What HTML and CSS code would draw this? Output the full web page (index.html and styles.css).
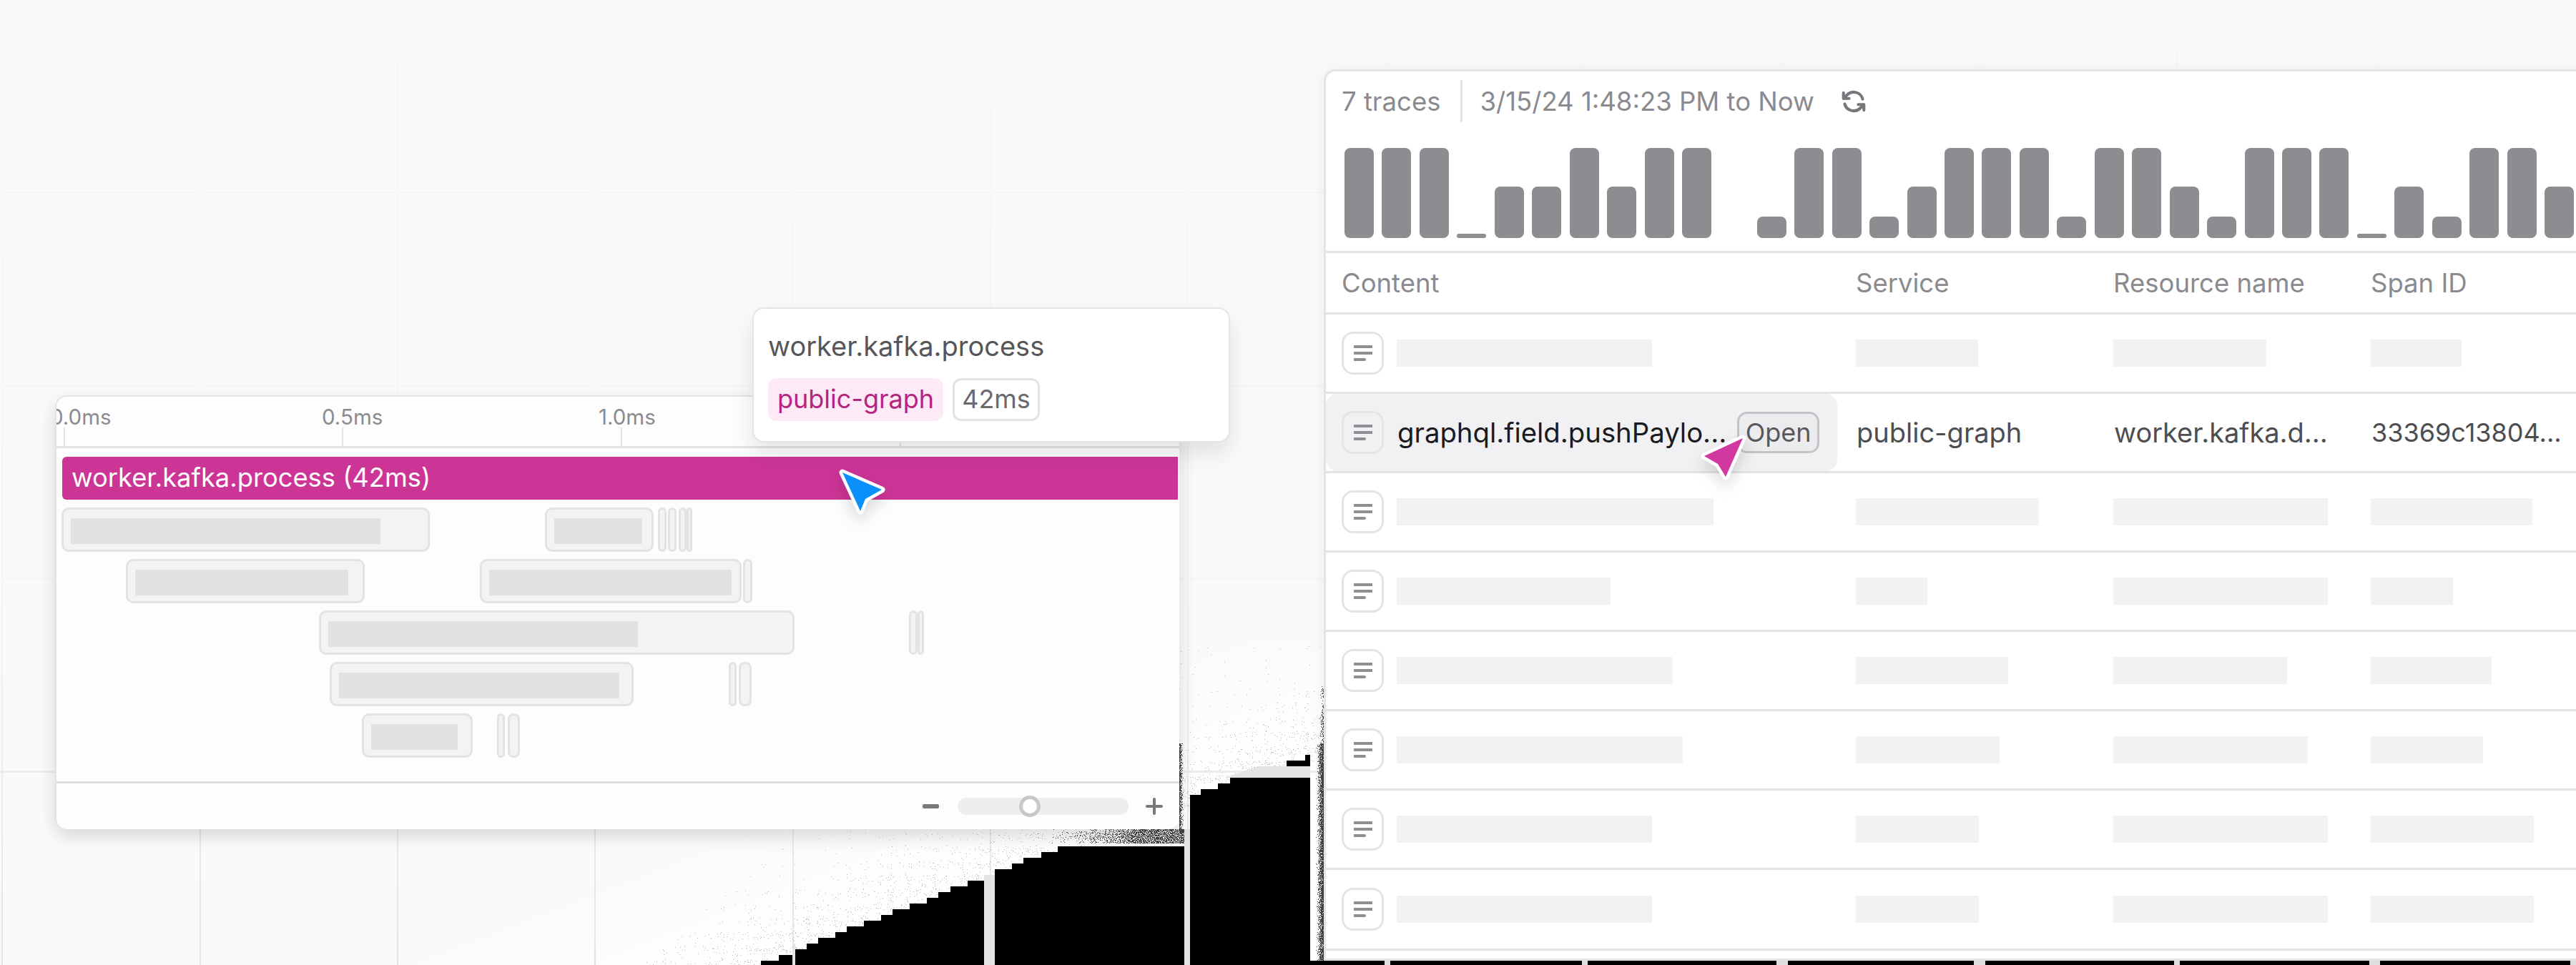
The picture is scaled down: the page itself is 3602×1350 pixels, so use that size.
FILE: index.html
```html
<!DOCTYPE html>
<html lang="en">
<head>
<meta charset="utf-8">
<title>Trace view</title>
<link rel="stylesheet" href="styles.css">
</head>
<body>
<main class="canvas">
  <svg class="backdrop" width="3602" height="1350" viewBox="0 0 3602 1350" aria-hidden="true">
    <defs>
      <linearGradient id="fadeV" gradientUnits="userSpaceOnUse" x1="0" y1="0" x2="0" y2="1350">
        <stop offset="0" stop-color="#f8f8f8"/>
        <stop offset="0.6" stop-color="#f5f5f5"/>
        <stop offset="1" stop-color="#e4e4e4"/>
      </linearGradient>
      <linearGradient id="glowFade" gradientUnits="userSpaceOnUse" x1="1380" y1="1020" x2="1448" y2="1196">
        <stop offset="0" stop-color="#fff" stop-opacity="0"/>
        <stop offset="1" stop-color="#fff" stop-opacity="0.9"/>
      </linearGradient>
      <linearGradient id="speckle" gradientUnits="userSpaceOnUse" x1="1408" y1="1093" x2="1448" y2="1196">
        <stop offset="0" stop-color="#000" stop-opacity="0.18"/>
        <stop offset="1" stop-color="#000" stop-opacity="0.3"/>
      </linearGradient>
      <linearGradient id="edgeRight" gradientUnits="userSpaceOnUse" x1="1836" y1="0" x2="1851" y2="0">
        <stop offset="0" stop-color="#000" stop-opacity="0.1"/>
        <stop offset="1" stop-color="#000" stop-opacity="0.75"/>
      </linearGradient>
      <linearGradient id="edgeSoft" gradientUnits="userSpaceOnUse" x1="1842" y1="0" x2="1851" y2="0">
        <stop offset="0" stop-color="#000" stop-opacity="0.1"/>
        <stop offset="1" stop-color="#000" stop-opacity="0.5"/>
      </linearGradient>
      <linearGradient id="edgeBottom" gradientUnits="userSpaceOnUse" x1="1400" y1="0" x2="1600" y2="0">
        <stop offset="0" stop-color="#000" stop-opacity="0.1"/>
        <stop offset="1" stop-color="#000" stop-opacity="0.55"/>
      </linearGradient>
      <linearGradient id="edgePanel" gradientUnits="userSpaceOnUse" x1="1649" y1="0" x2="1656" y2="0">
        <stop offset="0" stop-color="#000" stop-opacity="0.7"/>
        <stop offset="1" stop-color="#000" stop-opacity="0.2"/>
      </linearGradient>
      <filter id="dither" filterUnits="userSpaceOnUse" x="1300" y="900" width="600" height="450" color-interpolation-filters="sRGB">
        <feTurbulence type="fractalNoise" baseFrequency="0.95" numOctaves="2" seed="7" result="noise"/>
        <feColorMatrix in="noise" type="matrix" values="0 0 0 0 0  0 0 0 0 0  0 0 0 0 0  1 0 0 0 0" result="noiseAlpha"/>
        <feComposite in="SourceAlpha" in2="noiseAlpha" operator="arithmetic" k1="0" k2="1" k3="1" k4="-0.5" result="sum"/>
        <feComponentTransfer in="sum" result="mask">
          <feFuncA type="discrete" tableValues="0 1"/>
        </feComponentTransfer>
        <feFlood flood-color="#444"/>
        <feComposite in2="mask" operator="in"/>
      </filter>
      <filter id="ditherLight" filterUnits="userSpaceOnUse" x="900" y="900" width="1000" height="450" color-interpolation-filters="sRGB">
        <feTurbulence type="fractalNoise" baseFrequency="0.95" numOctaves="2" seed="11" result="noise"/>
        <feColorMatrix in="noise" type="matrix" values="0 0 0 0 0  0 0 0 0 0  0 0 0 0 0  1 0 0 0 0" result="noiseAlpha"/>
        <feComposite in="SourceAlpha" in2="noiseAlpha" operator="arithmetic" k1="0" k2="1" k3="1" k4="-0.5" result="sum"/>
        <feComponentTransfer in="sum" result="mask">
          <feFuncA type="discrete" tableValues="0 1"/>
        </feComponentTransfer>
        <feFlood flood-color="#bbb"/>
        <feComposite in2="mask" operator="in"/>
      </filter>
    </defs>

    <polygon class="glow" points="0,1350 0,900 1851,900 1851,1350"/>

    <g class="grid-lines">
      <rect x="2" y="0" width="2" height="1350"/>
      <rect x="279" y="0" width="2" height="1350"/>
      <rect x="555" y="0" width="2" height="1350"/>
      <rect x="831" y="0" width="2" height="1350"/>
      <rect x="1108" y="0" width="2" height="1350"/>
      <rect x="1384" y="0" width="2" height="1350"/>
      <rect x="1660" y="0" width="2" height="1350"/>
      <rect x="1938" y="0" width="2" height="100"/>
      <rect x="2214" y="0" width="2" height="100"/>
      <rect x="2490" y="0" width="2" height="100"/>
      <rect x="2767" y="0" width="2" height="100"/>
      <rect x="3043" y="0" width="2" height="100"/>
      <rect x="3320" y="0" width="2" height="100"/>
      <rect class="line-faint" x="0" y="268" width="1853" height="2"/>
      <rect class="line-faint" x="0" y="539" width="1853" height="2"/>
      <rect class="line-faint" x="0" y="808" width="1853" height="2"/>
      <rect class="line-mid" x="0" y="1078" width="1853" height="3"/>
    </g>

    <g filter="url(#ditherLight)">
      <polygon points="900,1350 1400,900 1851,900 1851,1060 1064,1350" fill="url(#speckle)"/>
    </g>
    <g filter="url(#dither)">
      <rect x="1836" y="1040" width="15" height="304" fill="url(#edgeRight)"/>
      <rect x="1842" y="960" width="9" height="80" fill="url(#edgeSoft)"/>
      <rect x="1400" y="1160" width="256" height="20" fill="url(#edgeBottom)"/>
      <rect x="1649" y="1040" width="7" height="125" fill="url(#edgePanel)"/>
    </g>

    <polygon class="stairs" points="1064,1350 1064,1344 1089,1344 1089,1336 1112,1336 1112,1328 1128,1328 1128,1320 1144,1320 1144,1312 1168,1312 1168,1304 1184,1304 1184,1296 1208,1296 1208,1288 1232,1288 1232,1280 1248,1280 1248,1272 1272,1272 1272,1264 1296,1264 1296,1256 1312,1256 1312,1248 1329,1248 1329,1240 1353,1240 1353,1232 1376,1232 1376,1224 1391,1224 1391,1216 1415,1216 1415,1208 1431,1208 1431,1200 1456,1200 1456,1192 1479,1192 1479,1184 1664,1184 1664,1112 1679,1112 1679,1104 1703,1104 1703,1096 1720,1096 1720,1088 1783,1088 1783,1072 1799,1072 1799,1064 1825,1064 1825,1056 1832,1056 1832,1350"/>
    <rect class="stairs" x="1832" y="1344" width="1770" height="6"/>
    <g class="bands">
      <rect x="1108" y="1320" width="4" height="30"/>
      <rect x="1376" y="1224" width="15" height="126"/>
      <rect x="1656" y="1160" width="8" height="190"/>
      <polygon points="1712,1088 1760,1072 1832,1072 1832,1088"/>
      <rect x="1936" y="1344" width="8" height="6"/>
      <rect x="2212" y="1344" width="8" height="6"/>
      <rect x="2484" y="1344" width="16" height="6"/>
      <rect x="2760" y="1344" width="16" height="6"/>
      <rect x="3040" y="1344" width="8" height="6"/>
      <rect x="3313" y="1344" width="15" height="6"/>
      <rect x="3594" y="1344" width="8" height="6"/>
    </g>
  </svg>

  <section class="panel timeline">
    <header class="axis">
      <span class="tick-label" style="left:-9px">0.0ms</span>
      <span class="tick-label" style="left:371px">0.5ms</span>
      <span class="tick-label" style="left:758px">1.0ms</span>
      <span class="tick" style="left:10px"></span>
      <span class="tick" style="left:399px"></span>
      <span class="tick" style="left:789px"></span>
      <span class="tick" style="left:1179px"></span>
    </header>
    <div class="flame">
      <div class="root-span">worker.kafka.process (42ms)</div>
      <div class="span-row">
        <div class="span" style="left:7px;width:515px"><i class="span-fill" style="width:433px"></i></div>
        <div class="span" style="left:683px;width:152px"><i class="span-fill" style="width:123px"></i></div>
        <div class="span thin" style="left:841px;width:12px"></div>
        <div class="span thin" style="left:855px;width:12px"></div>
        <div class="span thin" style="left:870px;width:11px"></div>
        <div class="span thin" style="left:881px;width:8px"></div>
      </div>
      <div class="span-row">
        <div class="span" style="left:97px;width:334px"><i class="span-fill" style="width:298px"></i></div>
        <div class="span" style="left:592px;width:366px"><i class="span-fill" style="width:339px"></i></div>
        <div class="span thin" style="left:960px;width:13px"></div>
      </div>
      <div class="span-row">
        <div class="span" style="left:367px;width:665px"><i class="span-fill" style="width:433px"></i></div>
        <div class="span thin" style="left:1192px;width:12px"></div>
        <div class="span thin" style="left:1204px;width:9px"></div>
      </div>
      <div class="span-row">
        <div class="span" style="left:382px;width:425px"><i class="span-fill" style="width:392px"></i></div>
        <div class="span thin" style="left:940px;width:11px"></div>
        <div class="span thin" style="left:954px;width:18px"></div>
      </div>
      <div class="span-row">
        <div class="span" style="left:427px;width:155px"><i class="span-fill" style="width:121px"></i></div>
        <div class="span thin" style="left:616px;width:11px"></div>
        <div class="span thin" style="left:631px;width:17px"></div>
      </div>
    </div>
    <footer class="zoom-bar">
      <svg class="zoom-icon" width="23" height="24" viewBox="0 0 23 24" aria-hidden="true"><rect x="0" y="9" width="23" height="6" rx="2"/></svg>
      <div class="slider"><span class="thumb"></span></div>
      <svg class="zoom-icon" width="24" height="24" viewBox="0 0 24 24" aria-hidden="true"><rect x="0" y="10" width="24" height="4" rx="2"/><rect x="10" y="0" width="4" height="24" rx="2"/></svg>
    </footer>
  </section>

  <aside class="panel tooltip">
    <div class="tooltip-title">worker.kafka.process</div>
    <div class="tag-row">
      <span class="tag tag-pink">public-graph</span>
      <span class="tag tag-outline">42ms</span>
    </div>
  </aside>

  <section class="panel traces">
    <header class="toolbar">
      <span class="toolbar-count">7 traces</span>
      <span class="toolbar-divider"></span>
      <span class="toolbar-date">3/15/24 1:48:23 PM to Now</span>
      <svg class="refresh" width="38" height="38" viewBox="0 0 24 24" aria-hidden="true">
        <g transform="translate(24 0) scale(-1 1)">
          <path d="M16.023 9.348h4.992v-.001M2.985 19.644v-4.992m0 0h4.992m-4.993 0 3.181 3.183a8.25 8.25 0 0 0 13.803-3.7M4.031 9.865a8.25 8.25 0 0 1 13.803-3.7l3.181 3.182m0-4.991v4.99"/>
        </g>
      </svg>
    </header>
    <div class="histogram">
      <i class="bar full"></i><i class="bar full"></i><i class="bar full"></i><i class="bar tiny"></i><i class="bar mid"></i><i class="bar mid"></i><i class="bar full"></i><i class="bar mid"></i><i class="bar full"></i><i class="bar full"></i><i class="bar none"></i><i class="bar small"></i><i class="bar full"></i><i class="bar full"></i><i class="bar small"></i><i class="bar mid"></i><i class="bar full"></i><i class="bar full"></i><i class="bar full"></i><i class="bar small"></i><i class="bar full"></i><i class="bar full"></i><i class="bar mid"></i><i class="bar small"></i><i class="bar full"></i><i class="bar full"></i><i class="bar full"></i><i class="bar tiny"></i><i class="bar mid"></i><i class="bar small"></i><i class="bar full"></i><i class="bar full"></i><i class="bar mid"></i>
    </div>
    <div class="table">
      <div class="table-row table-head">
        <div class="cell-main">Content</div>
        <div class="cell">Service</div>
        <div class="cell">Resource name</div>
        <div class="cell">Span ID</div>
      </div>

      <div class="table-row">
        <div class="cell-main">
          <span class="row-icon"><svg width="26" height="24" viewBox="0 0 26 24" aria-hidden="true"><path d="M1 3h24M1 12h24M1 21h14"/></svg></span>
          <i class="skeleton" style="width:357px"></i>
        </div>
        <div class="cell"><i class="skeleton" style="width:171px"></i></div>
        <div class="cell"><i class="skeleton" style="width:214px"></i></div>
        <div class="cell"><i class="skeleton" style="width:127px"></i></div>
      </div>

      <div class="table-row is-active">
        <div class="cell-main">
          <span class="row-icon"><svg width="26" height="24" viewBox="0 0 26 24" aria-hidden="true"><path d="M1 3h24M1 12h24M1 21h14"/></svg></span>
          <span class="row-name">graphql.field.pushPaylo...</span>
          <span class="open-btn">Open</span>
        </div>
        <div class="cell cell-text">public-graph</div>
        <div class="cell cell-text">worker.kafka.d...</div>
        <div class="cell cell-text cell-id">33369c13804...</div>
      </div>

      <div class="table-row">
        <div class="cell-main">
          <span class="row-icon"><svg width="26" height="24" viewBox="0 0 26 24" aria-hidden="true"><path d="M1 3h24M1 12h24M1 21h14"/></svg></span>
          <i class="skeleton" style="width:443px"></i>
        </div>
        <div class="cell"><i class="skeleton" style="width:256px"></i></div>
        <div class="cell"><i class="skeleton" style="width:300px"></i></div>
        <div class="cell"><i class="skeleton" style="width:226px"></i></div>
      </div>

      <div class="table-row">
        <div class="cell-main">
          <span class="row-icon"><svg width="26" height="24" viewBox="0 0 26 24" aria-hidden="true"><path d="M1 3h24M1 12h24M1 21h14"/></svg></span>
          <i class="skeleton" style="width:299px"></i>
        </div>
        <div class="cell"><i class="skeleton" style="width:100px"></i></div>
        <div class="cell"><i class="skeleton" style="width:300px"></i></div>
        <div class="cell"><i class="skeleton" style="width:115px"></i></div>
      </div>

      <div class="table-row">
        <div class="cell-main">
          <span class="row-icon"><svg width="26" height="24" viewBox="0 0 26 24" aria-hidden="true"><path d="M1 3h24M1 12h24M1 21h14"/></svg></span>
          <i class="skeleton" style="width:386px"></i>
        </div>
        <div class="cell"><i class="skeleton" style="width:213px"></i></div>
        <div class="cell"><i class="skeleton" style="width:243px"></i></div>
        <div class="cell"><i class="skeleton" style="width:169px"></i></div>
      </div>

      <div class="table-row">
        <div class="cell-main">
          <span class="row-icon"><svg width="26" height="24" viewBox="0 0 26 24" aria-hidden="true"><path d="M1 3h24M1 12h24M1 21h14"/></svg></span>
          <i class="skeleton" style="width:400px"></i>
        </div>
        <div class="cell"><i class="skeleton" style="width:201px"></i></div>
        <div class="cell"><i class="skeleton" style="width:272px"></i></div>
        <div class="cell"><i class="skeleton" style="width:157px"></i></div>
      </div>

      <div class="table-row">
        <div class="cell-main">
          <span class="row-icon"><svg width="26" height="24" viewBox="0 0 26 24" aria-hidden="true"><path d="M1 3h24M1 12h24M1 21h14"/></svg></span>
          <i class="skeleton" style="width:357px"></i>
        </div>
        <div class="cell"><i class="skeleton" style="width:172px"></i></div>
        <div class="cell"><i class="skeleton" style="width:300px"></i></div>
        <div class="cell"><i class="skeleton" style="width:228px"></i></div>
      </div>

      <div class="table-row table-row-last">
        <div class="cell-main">
          <span class="row-icon"><svg width="26" height="24" viewBox="0 0 26 24" aria-hidden="true"><path d="M1 3h24M1 12h24M1 21h14"/></svg></span>
          <i class="skeleton" style="width:357px"></i>
        </div>
        <div class="cell"><i class="skeleton" style="width:172px"></i></div>
        <div class="cell"><i class="skeleton" style="width:300px"></i></div>
        <div class="cell"><i class="skeleton" style="width:228px"></i></div>
      </div>
    </div>
  </section>

  <svg class="cursor cursor-blue" width="80" height="80" viewBox="1168 650 80 80" aria-hidden="true">
    <path d="M1178 661 L1233 685 L1210 698 L1203 715 Z"/>
  </svg>
  <svg class="cursor cursor-pink" width="80" height="80" viewBox="2370 600 80 80" aria-hidden="true">
    <path d="M2437 613 L2383 638 L2402 649 L2413 667 Z"/>
  </svg>
</main>
</body>
</html>
```

FILE: styles.css
```css
* { box-sizing: border-box; }

html, body {
  margin: 0;
  padding: 0;
  background: #fafafa;
}

body {
  width: 3602px;
  height: 1350px;
  overflow: hidden;
  font-family: "Inter", "Liberation Sans", sans-serif;
}

.canvas {
  position: relative;
  width: 3602px;
  height: 1350px;
  overflow: hidden;
  background: #fafafa;
}

.backdrop {
  position: absolute;
  inset: 0;
  display: block;
}

.glow { fill: url(#glowFade); }
.grid-lines rect { fill: url(#fadeV); }
.grid-lines .line-faint { fill: #f6f6f6; }
.grid-lines .line-mid { fill: #ececec; }
.stairs { fill: #000; }
.bands { fill: #e3e3e3; }

.panel {
  position: absolute;
  background: #fdfdfd;
  border: 2px solid #e4e4e4;
}

/* Timeline window */
.timeline {
  left: 77px;
  top: 553px;
  width: 1572px;
  height: 607px;
  border-radius: 16px;
  overflow: hidden;
  display: flex;
  flex-direction: column;
  border-right: 0;
  border-bottom: 0;
  box-shadow: 0 10px 24px rgba(0, 0, 0, 0.14);
}

.axis {
  position: relative;
  height: 72px;
  flex: none;
  border-bottom: 3px solid #e3e3e5;
}

.tick-label {
  position: absolute;
  top: 10px;
  font-size: 29.5px;
  line-height: 36px;
  color: #8b8b90;
}

.tick {
  position: absolute;
  bottom: 0;
  width: 2px;
  height: 26px;
  background: #e3e3e5;
}

.flame {
  flex: 1;
  display: flex;
  flex-direction: column;
  gap: 10px;
  padding: 12px 2px 0 8px;
}

.root-span {
  height: 60px;
  margin-bottom: 1px;
  padding-left: 13px;
  background: #cc3596;
  border-radius: 6px 0 0 6px;
  color: #fff;
  font-size: 36.3px;
  line-height: 58px;
  white-space: nowrap;
}

.span-row {
  position: relative;
  height: 62px;
  margin-left: -8px;
}

.span {
  position: absolute;
  top: 0;
  height: 62px;
  padding: 12px 10px;
  background: #f3f3f4;
  border: 3px solid #e3e3e5;
  border-radius: 10px;
}

.span.thin {
  padding: 0;
  border-radius: 8px;
}

.span-fill {
  display: block;
  height: 36px;
  background: #e2e2e4;
}

.zoom-bar {
  flex: none;
  height: 67px;
  padding-right: 23px;
  border-top: 3px solid #dcdcdc;
  display: flex;
  align-items: center;
  justify-content: flex-end;
}

.zoom-icon { fill: #77777c; flex: none; }

.slider {
  position: relative;
  width: 239px;
  height: 24px;
  margin: 0 24px 0 26px;
  border-radius: 12px;
  background: #eeeef0;
}

.thumb {
  position: absolute;
  left: 86px;
  top: -3px;
  width: 30px;
  height: 30px;
  border-radius: 50%;
  border: 5px solid #c8c8cc;
  background: #fff;
}

/* Tooltip */
.tooltip {
  left: 1052px;
  top: 430px;
  width: 668px;
  height: 189px;
  padding: 20px 20px;
  border-radius: 16px;
  background: #fff;
  box-shadow: 0 16px 32px rgba(0, 0, 0, 0.1);
}

.tooltip-title {
  font-size: 38px;
  line-height: 64px;
  color: #56565a;
}

.tag-row {
  display: flex;
  gap: 13px;
  margin-top: 13px;
}

.tag {
  height: 60px;
  padding: 0 10px;
  border-radius: 12px;
  font-size: 36px;
  line-height: 58px;
}

.tag-pink {
  background: #fdeaf6;
  color: #b5247f;
  padding: 0 13px;
}

.tag-outline {
  background: #fff;
  border: 3px solid #e3e3e5;
  color: #6a6a6e;
  line-height: 52px;
}

/* Traces window */
.traces {
  left: 1851px;
  top: 97px;
  width: 1780px;
  height: 1247px;
  border-width: 3px;
  border-radius: 16px 0 0 0;
  background: #fff;
  box-shadow: 0 0 24px rgba(0, 0, 0, 0.06);
}

.toolbar {
  height: 59px;
  margin-top: 12px;
  padding-left: 22px;
  display: flex;
  align-items: center;
  color: #8a8a8f;
  font-size: 36.5px;
}

.toolbar-divider {
  flex: none;
  width: 3px;
  height: 59px;
  margin: 0 25px 0 27px;
  background: #e3e3e5;
}

.refresh {
  flex: none;
  margin-left: 36px;
  fill: none;
  stroke: #77777c;
  stroke-width: 2.6;
  stroke-linecap: round;
  stroke-linejoin: round;
}

.histogram {
  margin-top: 36px;
  height: 126px;
  padding-left: 26px;
  display: flex;
  align-items: flex-end;
  gap: 11.44px;
}

.bar {
  flex: none;
  width: 41px;
  background: #8c8c91;
  border-radius: 8px;
}

.bar.full { height: 126px; }
.bar.mid { height: 72px; }
.bar.small { height: 30px; }
.bar.tiny { height: 6px; border-radius: 3px; }
.bar.none { height: 0; }

.table {
  margin-top: 18px;
  border-top: 3px solid #e4e4e6;
}

.table-row {
  display: grid;
  grid-template-columns: 741px 360px 360px 1fr;
  height: 111px;
  border-bottom: 3px solid #e4e4e6;
}

.table-row-last { height: 113px; }

.table-head {
  height: 86px;
  color: #8a8a8f;
  font-size: 36.5px;
}

.cell-main, .cell {
  display: flex;
  align-items: center;
  white-space: nowrap;
}

.cell-main {
  padding-left: 22px;
}

.row-icon {
  flex: none;
  width: 59px;
  height: 60px;
  display: flex;
  align-items: center;
  justify-content: center;
  border: 3px solid #e4e4e6;
  border-radius: 16px;
  background: #fff;
}

.row-icon path {
  fill: none;
  stroke: #8f8f93;
  stroke-width: 4;
  stroke-linecap: round;
}

.skeleton {
  display: block;
  height: 38px;
  background: #f2f2f4;
}

.cell-main .skeleton { margin-left: 18px; }

.is-active .cell-main {
  background: #f1f1f3;
  border-radius: 16px;
  margin-right: 26px;
}

.is-active .row-icon { background: transparent; }

.row-name {
  margin-left: 19px;
  font-size: 38.3px;
  color: #1a1a1f;
}

.open-btn {
  width: 115px;
  height: 58px;
  margin-left: 15px;
  text-align: center;
  border: 3px solid #c4c4c8;
  border-radius: 14px;
  font-size: 36px;
  line-height: 52px;
  color: #58585c;
  background: #ececef;
}

.cell-text {
  font-size: 38px;
  color: #4e4e52;
  padding-left: 1px;
}

.cell-id { font-size: 36px; }

/* Cursors */
.cursor {
  position: absolute;
  overflow: visible;
  filter: drop-shadow(0 10px 10px rgba(0, 0, 0, 0.14));
}

.cursor path {
  stroke: #fff;
  stroke-width: 9;
  stroke-linejoin: round;
  paint-order: stroke;
}

.cursor-blue { left: 1168px; top: 650px; }
.cursor-blue path { fill: #0a90fb; }
.cursor-pink { left: 2370px; top: 600px; }
.cursor-pink path { fill: #d338a0; }
```
